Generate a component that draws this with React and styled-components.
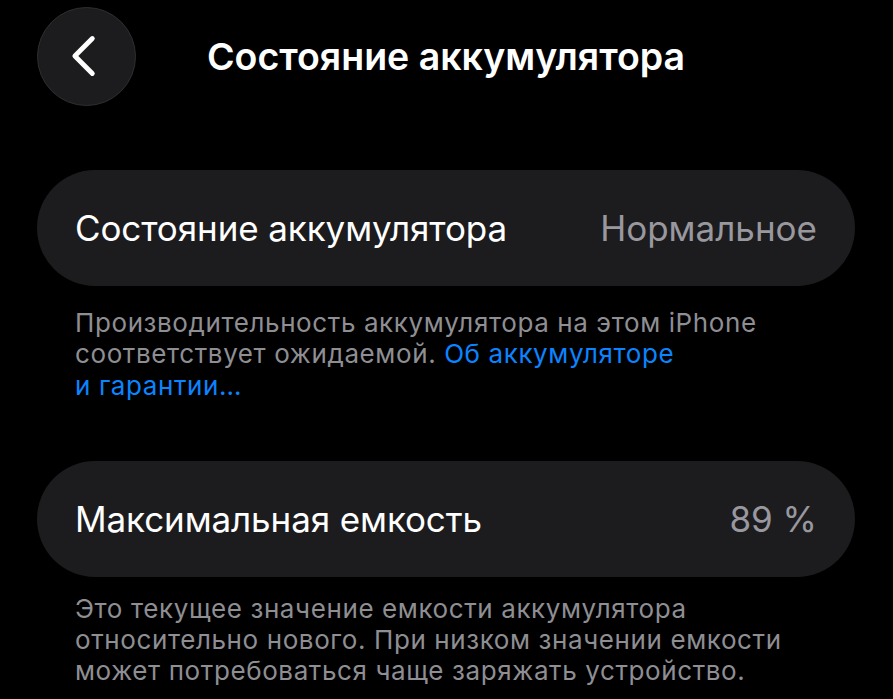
import React from "react";
import styled, { createGlobalStyle } from "styled-components";

const GlobalStyle = createGlobalStyle`
  html, body {
    margin: 0;
    padding: 0;
    background: #000000;
  }
  body {
    font-family: Inter, "Noto Sans", "DejaVu Sans", sans-serif;
    -webkit-font-smoothing: antialiased;
  }
`;

function App() {
  return (
    <Screen>
      <GlobalStyle />
      <Header>
        <BackButton aria-label="Назад">
          <svg width="100" height="100" viewBox="0 0 100 100">
            <polyline
              points="56,31 38,49 56,67"
              fill="none"
              stroke="#ffffff"
              strokeWidth="5"
              strokeLinecap="round"
              strokeLinejoin="round"
            />
          </svg>
        </BackButton>
        <Title>Состояние аккумулятора</Title>
        <span />
      </Header>

      <Card top={64}>
        <Label>Состояние аккумулятора</Label>
        <Value>Нормальное</Value>
      </Card>
      <Footer top={21}>
        Производительность аккумулятора на этом iPhone
        <br />
        соответствует ожидаемой. <Link>Об аккумуляторе</Link>
        <br />
        <Link>и гарантии…</Link>
      </Footer>

      <Card top={60}>
        <Label>Максимальная емкость</Label>
        <Value>89 %</Value>
      </Card>
      <Footer top={16}>
        Это текущее значение емкости аккумулятора
        <br />
        относительно нового. При низком значении емкости
        <br />
        может потребоваться чаще заряжать устройство.
      </Footer>
    </Screen>
  );
}

const Screen = styled.div`
  width: 893px;
  height: 699px;
  overflow: hidden;
  box-sizing: border-box;
  padding: 7px 38px 0 37px;
  background: #000000;
  color: #ffffff;
`;

const Header = styled.header`
  display: grid;
  grid-template-columns: 99px 1fr 99px;
  align-items: center;
  height: 99px;
`;

const BackButton = styled.button`
  width: 99px;
  height: 99px;
  padding: 0;
  border-radius: 50%;
  border: 1px solid #2e2e31;
  background: #1c1c1e;
  display: flex;
  align-items: center;
  justify-content: center;
  box-sizing: border-box;
  cursor: pointer;

  svg {
    display: block;
  }
`;

const Title = styled.h1`
  margin: 0;
  text-align: center;
  font-size: 37.5px;
  font-weight: 600;
  letter-spacing: 0;
  color: #ffffff;
  white-space: nowrap;
`;

const Card = styled.div`
  margin-top: ${(props) => props.top}px;
  height: 116px;
  border-radius: 58px;
  background: #1c1c1e;
  display: flex;
  align-items: center;
  justify-content: space-between;
  padding: 0 38px;
  box-sizing: border-box;
`;

const Label = styled.span`
  font-size: 35px;
  font-weight: 400;
  letter-spacing: -0.1px;
  color: #ffffff;
`;

const Value = styled.span`
  font-size: 35px;
  font-weight: 400;
  color: #98989e;
`;

const Footer = styled.p`
  margin: ${(props) => props.top}px 0 0;
  padding: 0 38px;
  font-size: 26px;
  letter-spacing: 0.6px;
  line-height: 31.3px;
  color: #8e8e93;
  white-space: nowrap;
`;

const Link = styled.span`
  color: #0a84ff;
`;

export default App;
